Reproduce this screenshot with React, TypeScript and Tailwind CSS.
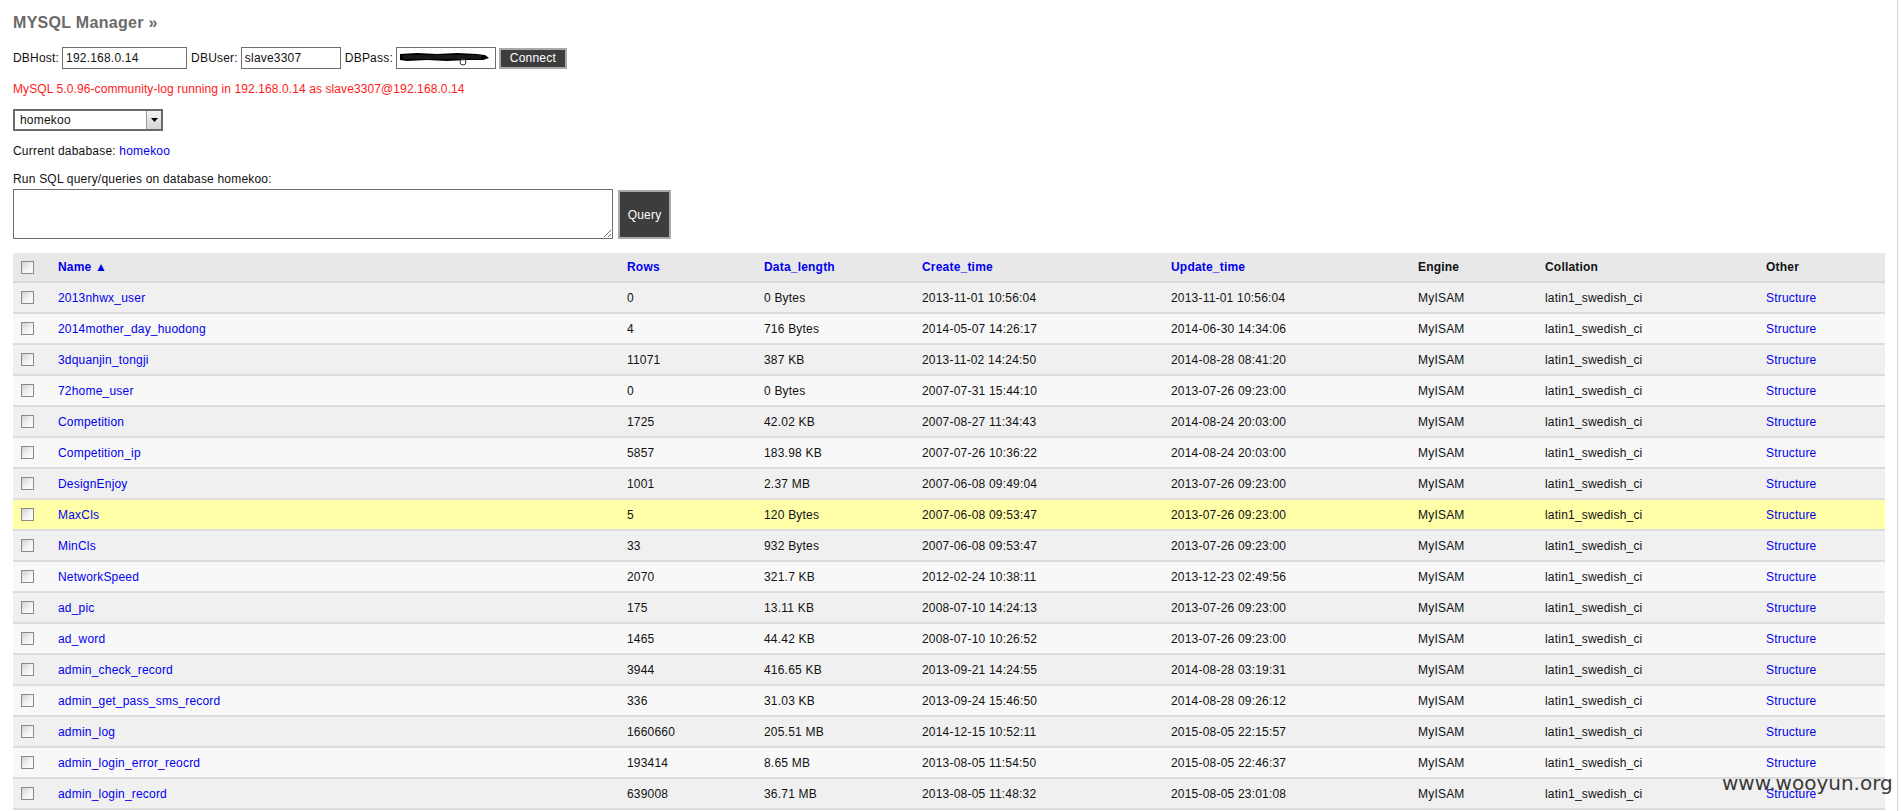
import React from "react";

type Table = {
  name: string;
  rows: string;
  size: string;
  created: string;
  updated: string;
};

const tables: Table[] = [
  { name: "2013nhwx_user", rows: "0", size: "0 Bytes", created: "2013-11-01 10:56:04", updated: "2013-11-01 10:56:04" },
  { name: "2014mother_day_huodong", rows: "4", size: "716 Bytes", created: "2014-05-07 14:26:17", updated: "2014-06-30 14:34:06" },
  { name: "3dquanjin_tongji", rows: "11071", size: "387 KB", created: "2013-11-02 14:24:50", updated: "2014-08-28 08:41:20" },
  { name: "72home_user", rows: "0", size: "0 Bytes", created: "2007-07-31 15:44:10", updated: "2013-07-26 09:23:00" },
  { name: "Competition", rows: "1725", size: "42.02 KB", created: "2007-08-27 11:34:43", updated: "2014-08-24 20:03:00" },
  { name: "Competition_ip", rows: "5857", size: "183.98 KB", created: "2007-07-26 10:36:22", updated: "2014-08-24 20:03:00" },
  { name: "DesignEnjoy", rows: "1001", size: "2.37 MB", created: "2007-06-08 09:49:04", updated: "2013-07-26 09:23:00" },
  { name: "MaxCls", rows: "5", size: "120 Bytes", created: "2007-06-08 09:53:47", updated: "2013-07-26 09:23:00" },
  { name: "MinCls", rows: "33", size: "932 Bytes", created: "2007-06-08 09:53:47", updated: "2013-07-26 09:23:00" },
  { name: "NetworkSpeed", rows: "2070", size: "321.7 KB", created: "2012-02-24 10:38:11", updated: "2013-12-23 02:49:56" },
  { name: "ad_pic", rows: "175", size: "13.11 KB", created: "2008-07-10 14:24:13", updated: "2013-07-26 09:23:00" },
  { name: "ad_word", rows: "1465", size: "44.42 KB", created: "2008-07-10 10:26:52", updated: "2013-07-26 09:23:00" },
  { name: "admin_check_record", rows: "3944", size: "416.65 KB", created: "2013-09-21 14:24:55", updated: "2014-08-28 03:19:31" },
  { name: "admin_get_pass_sms_record", rows: "336", size: "31.03 KB", created: "2013-09-24 15:46:50", updated: "2014-08-28 09:26:12" },
  { name: "admin_log", rows: "1660660", size: "205.51 MB", created: "2014-12-15 10:52:11", updated: "2015-08-05 22:15:57" },
  { name: "admin_login_error_reocrd", rows: "193414", size: "8.65 MB", created: "2013-08-05 11:54:50", updated: "2015-08-05 22:46:37" },
  { name: "admin_login_record", rows: "639008", size: "36.71 MB", created: "2013-08-05 11:48:32", updated: "2015-08-05 23:01:08" },
];

const cols =
  "grid grid-cols-[37px_569px_137px_158px_249px_247px_127px_221px_127px] items-center";

function Checkbox() {
  return (
    <span className="block w-[13px] h-[13px] border border-[#8a8a8a] bg-gradient-to-br from-[#d0d0d0] via-[#f0f0f0] to-white" />
  );
}

function DarkButton({ label, className }: { label: string; className: string }) {
  return (
    <button
      className={`bg-[#3d3d3d] text-white text-[12px] border-2 border-[#a9a9a9] flex items-center justify-center ${className}`}
    >
      {label}
    </button>
  );
}

export default function App() {
  return (
    <div className="relative min-h-[811px] bg-white text-[12px] tracking-[0.2px] text-[#111] font-['Liberation_Sans',Arial,sans-serif] px-[13px]">
      {/* title */}
      <div className="pt-[14px] leading-[18px] text-[16px] font-bold text-[#6a6a6a] tracking-[0.3px]">
        MYSQL Manager »
      </div>

      {/* connection form */}
      <div className="mt-[15px] flex items-center h-[22px]">
        <span>DBHost:</span>
        <input
          readOnly
          value="192.168.0.14"
          className="ml-[3px] w-[125px] h-[22px] border border-[#6f6f6f] px-[3px] text-[12px] tracking-[0.2px] outline-none"
        />
        <span className="ml-[4px]">DBUser:</span>
        <input
          readOnly
          value="slave3307"
          className="ml-[3px] w-[100px] h-[22px] border border-[#6f6f6f] px-[3px] text-[12px] tracking-[0.2px] outline-none"
        />
        <span className="ml-[4px]">DBPass:</span>
        <div className="ml-[3px] w-[100px] h-[22px] border border-[#6f6f6f] relative overflow-hidden">
          <svg width="100" height="20" viewBox="0 0 100 20" className="absolute left-0 top-0">
            <path
              d="M3 6 L20 5 L40 6 L60 5 L80 6 L88 7 L92 10 L86 12 L70 12 L50 13 L30 12 L10 13 L3 12 Z"
              fill="#000"
            />
            <path d="M5 8 L85 8 M6 10 L84 10" stroke="#222" strokeWidth="1.5" />
            <circle cx="66" cy="14" r="3" fill="none" stroke="#333" strokeWidth="1" />
          </svg>
        </div>
        <DarkButton label="Connect" className="ml-[3px] w-[68px] h-[21px]" />
      </div>

      {/* status */}
      <div className="mt-[12px] leading-[16px] text-[#ff1a1a] tracking-[0.1px]">
        MySQL 5.0.96-community-log running in 192.168.0.14 as slave3307@192.168.0.14
      </div>

      {/* database select */}
      <div className="mt-[12px] w-[150px] h-[22px] border-2 border-[#6a6a6a] flex items-center">
        <span className="flex-1 pl-[5px]">homekoo</span>
        <span className="w-[15px] h-full bg-gradient-to-b from-[#f4f4f4] to-[#d6d6d6] border-l border-[#9a9a9a] flex items-center justify-center">
          <svg width="7" height="4" viewBox="0 0 7 4">
            <path d="M0 0 L7 0 L3.5 4 Z" fill="#000" />
          </svg>
        </span>
      </div>

      <div className="mt-[12px] leading-[16px]">
        Current dababase: <span className="text-[#0000ee]">homekoo</span>
      </div>

      <div className="mt-[12px] leading-[16px]">Run SQL query/queries on database homekoo:</div>

      {/* query box */}
      <div className="mt-[2px] flex items-start">
        <textarea className="w-[600px] h-[50px] border border-[#6f6f6f] outline-none resize-y" />
        <DarkButton label="Query" className="ml-[5px] mt-[1px] w-[53px] h-[49px]" />
      </div>

      {/* tables list */}
      <div className="mt-[14px] w-[1872px]">
        <div className={`${cols} h-[30px] bg-[#e8e8e8] border-b-2 border-[#dadada] font-bold`}>
          <div className="pl-[8px]">
            <Checkbox />
          </div>
          <div className="pl-[8px] text-[#0000ee]">Name ▲</div>
          <div className="pl-[8px] text-[#0000ee]">Rows</div>
          <div className="pl-[8px] text-[#0000ee]">Data_length</div>
          <div className="pl-[8px] text-[#0000ee]">Create_time</div>
          <div className="pl-[8px] text-[#0000ee]">Update_time</div>
          <div className="pl-[8px]">Engine</div>
          <div className="pl-[8px]">Collation</div>
          <div className="pl-[8px]">Other</div>
        </div>
        {tables.map((t, i) => {
          const bg =
            t.name === "MaxCls" ? "bg-[#ffffaa]" : i % 2 === 0 ? "bg-[#f0f0f0]" : "bg-[#f8f8f8]";
          return (
            <div key={t.name} className={`${cols} h-[31px] border-b-2 border-[#dcdcdc] ${bg}`}>
              <div className="pl-[8px]">
                <Checkbox />
              </div>
              <div className="pl-[8px] text-[#0000ee]">{t.name}</div>
              <div className="pl-[8px]">{t.rows}</div>
              <div className="pl-[8px]">{t.size}</div>
              <div className="pl-[8px]">{t.created}</div>
              <div className="pl-[8px]">{t.updated}</div>
              <div className="pl-[8px]">MyISAM</div>
              <div className="pl-[8px]">latin1_swedish_ci</div>
              <div className="pl-[8px] text-[#0000ee]">Structure</div>
            </div>
          );
        })}
      </div>

      {/* page edge */}
      <div className="absolute top-0 bottom-0 left-[1897px] w-px bg-[#d6d6d6]" />

      {/* watermark */}
      <div className="absolute left-[1722px] top-[769px] text-[20px] leading-[28px] tracking-normal text-[#3a3a3a] font-['DejaVu_Sans',sans-serif]">
        www.wooyun.org
      </div>
    </div>
  );
}
